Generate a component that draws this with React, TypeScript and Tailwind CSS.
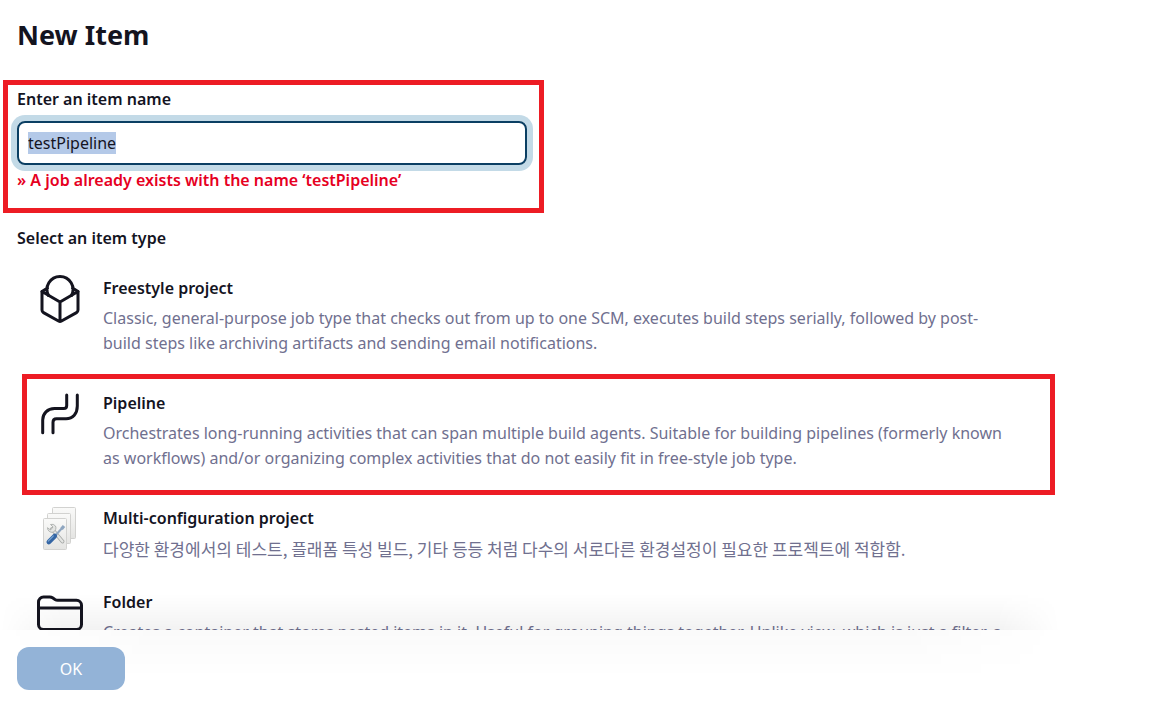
import { useEffect, useRef } from "react";
import type { ReactNode } from "react";

type Item = { id: string; title: string; text: string; icon: ReactNode; marked?: boolean; gap: string; font: string };

const latin = "text-base";
const korean = "text-[17px] font-['Noto_Sans_CJK_KR',sans-serif]";

const stroke = {
  fill: "none",
  stroke: "#14141f",
  strokeWidth: 3,
  strokeLinecap: "round" as const,
  strokeLinejoin: "round" as const,
};

const FreestyleIcon = () => (
  <svg viewBox="0 1 48 48" className="size-12 overflow-visible" {...stroke}>
    <path d="M24 27 6 16.5V35a3 3 0 0 0 1.5 2.6L22.5 46a3 3 0 0 0 3 0L40.5 37.6a3 3 0 0 0 1.5-2.6V16.500ZV46" />
    <path d="M6 16.5l5.500-3.500M42 16.500l-5.500-3.500M12.500 20.500a13 13 0 1 1 23 0" />
  </svg>
);

const PipelineIcon = () => (
  <svg viewBox="0 1 48 48" className="size-12 overflow-visible" {...stroke}>
    <path d="M30.7 5V15.5q0 3-3 3H18.5C11.5 18.5 6.7 23.5 6.7 30V42.7" />
    <path d="M41.3 5V16C41.3 23.5 37 28.700 30 28.700H20.500q-3.500 0-3.500 3.500V42.700" />
  </svg>
);

const MatrixIcon = () => (
  <svg viewBox="0 1 48 48" className="size-12 overflow-visible">
    <defs>
      <linearGradient id="sheet" x1="0" y1="0" x2="0" y2="1">
        <stop offset="0" stopColor="#fafaf9" />
        <stop offset="1" stopColor="#e4e4e2" />
      </linearGradient>
    </defs>
    <g fill="url(#sheet)" stroke="#d2d2d0" strokeWidth="1">
      <rect x="16.5" y="2.5" width="23" height="31" rx="1" />
      <rect x="11.5" y="8.5" width="23" height="30" rx="1" />
      <rect x="7.5" y="13.5" width="23" height="31" rx="1" />
    </g>
    <path d="M16 24l10.500 12.500" stroke="#a5a8a6" strokeWidth="3.8" strokeLinecap="round" />
    <path d="M16 24l10.500 12.500" stroke="#e4e5e3" strokeWidth="2.2" strokeLinecap="round" />
    <path
      d="M14.500 19.500l2.500 2.500-2.500 3-3-2.300a4.500 4.500 0 0 0 5.500 4.500 4.500 4.500 0 0 0 2.500-6.200 4.500 4.500 0 0 0-5-1.500Z"
      fill="#e4e5e3"
      stroke="#a5a8a6"
      strokeWidth=".8"
    />
    <path d="M19 31l8-9" stroke="#8fa6c0" strokeWidth="2" />
    <path d="M25.500 24l2.500-3" stroke="#8fa6c0" strokeWidth="3.2" />
    <path d="M12.800 37l6-6" stroke="#3465a4" strokeWidth="4.600" strokeLinecap="round" />
    <path d="M12.300 36l5-5" stroke="#729fcf" strokeWidth="1.200" strokeLinecap="round" />
  </svg>
);

const FolderIcon = () => (
  <svg viewBox="0 0 48 48" className="size-12" {...stroke}>
    <path d="M2.5 34.5V12a5 5 0 0 1 5-5h6.2a5 5 0 0 1 2.800.8l2.500 1.700a5 5 0 0 0 2.800.8h18.700a5 5 0 0 1 5 5v19.200a5 5 0 0 1-5 5h-33a5 5 0 0 1-5-5ZM2.500 18h43" />
  </svg>
);

const items: Item[] = [
  {
    id: "freestyle",
    title: "Freestyle project",
    text: "Classic, general-purpose job type that checks out from up to one SCM, executes build steps serially, followed by post-build steps like archiving artifacts and sending email notifications.",
    icon: <FreestyleIcon />,
    gap: "pb-[35px]",
    font: latin,
  },
  {
    id: "pipeline",
    title: "Pipeline",
    text: "Orchestrates long-running activities that can span multiple build agents. Suitable for building pipelines (formerly known as workflows) and/or organizing complex activities that do not easily fit in free-style job type.",
    icon: <PipelineIcon />,
    marked: true,
    gap: "pb-[35px]",
    font: latin,
  },
  {
    id: "matrix",
    title: "Multi-configuration project",
    text: "다양한 환경에서의 테스트, 플래폼 특성 빌드, 기타 등등 처럼 다수의 서로다른 환경설정이 필요한 프로젝트에 적합함.",
    icon: <MatrixIcon />,
    gap: "pb-[29px]",
    font: korean,
  },
  {
    id: "folder",
    title: "Folder",
    text: "Creates a container that stores nested items in it. Useful for grouping things together. Unlike view, which is just a filter, a",
    icon: <FolderIcon />,
    gap: "pb-[35px]",
    font: latin,
  },
];

export default function App() {
  const nameRef = useRef<HTMLInputElement>(null);

  useEffect(() => {
    nameRef.current?.focus();
    nameRef.current?.select();
  }, []);

  return (
    <form
      className="flex h-screen flex-col bg-white font-['Noto_Sans','Noto_Sans_CJK_KR',sans-serif] text-base text-[#14141f]"
      onSubmit={(e) => e.preventDefault()}
    >
      <main className="min-h-0 flex-1 overflow-hidden px-[17px] pt-[15px]">
        <h1 className="text-[27px] leading-10 font-bold">New Item</h1>

        <div className="relative mt-[31px] max-w-[510px]">
          <div className="pointer-events-none absolute -top-[6px] -right-[17px] -bottom-5 -left-[14px] border-5 border-[#ed1c24]" />
          <label htmlFor="name" className="block leading-[26px] font-semibold">
            Enter an item name
          </label>
          <input
            id="name"
            ref={nameRef}
            defaultValue="testPipeline"
            className="mt-[9px] block h-11 w-full rounded-lg border-2 border-[#0b3f63] px-[9px] shadow-[0_0_0_6px_#c3dae7] outline-none selection:bg-[#b4c9e8] selection:text-[#14141f]"
          />
          <p className="mt-[3px] leading-[25px] font-semibold text-[#e6001f]">
            » A job already exists with the name ‘testPipeline’
          </p>
        </div>

        <h2 className="mt-[33px] leading-[25px] font-semibold">Select an item type</h2>

        <ul className="mt-[25px] max-w-[1030px]">
          {items.map((item) => (
            <li key={item.id} className={`relative flex pl-[19px] ${item.gap}`}>
              {item.marked && (
                <div className="pointer-events-none absolute -top-[17px] -right-2 bottom-[11px] left-[5px] border-5 border-[#ed1c24]" />
              )}
              <div className="w-[67px] shrink-0">{item.icon}</div>
              <div className="max-w-[910px] min-w-0">
                <h3 className="leading-[25px] font-semibold">{item.title}</h3>
                <p className={`mt-[5px] text-[#70708f] ${item.font} leading-[25px]`}>{item.text}</p>
              </div>
            </li>
          ))}
        </ul>
      </main>

      <footer className="relative h-[73px] shrink-0 px-[17px] pt-[17px]">
        <div className="pointer-events-none absolute bottom-full left-0 h-9 w-full max-w-[1060px] bg-linear-to-t from-black/5 to-transparent mask-x-from-94%" />
        <div className="pointer-events-none absolute top-0 left-0 h-12 w-full max-w-[1060px] bg-linear-to-b from-black/2 to-transparent mask-x-from-85%" />
        <button type="submit" disabled className="relative h-[43px] w-[108px] rounded-xl bg-[#93b3d7] text-white">
          OK
        </button>
      </footer>
    </form>
  );
}
